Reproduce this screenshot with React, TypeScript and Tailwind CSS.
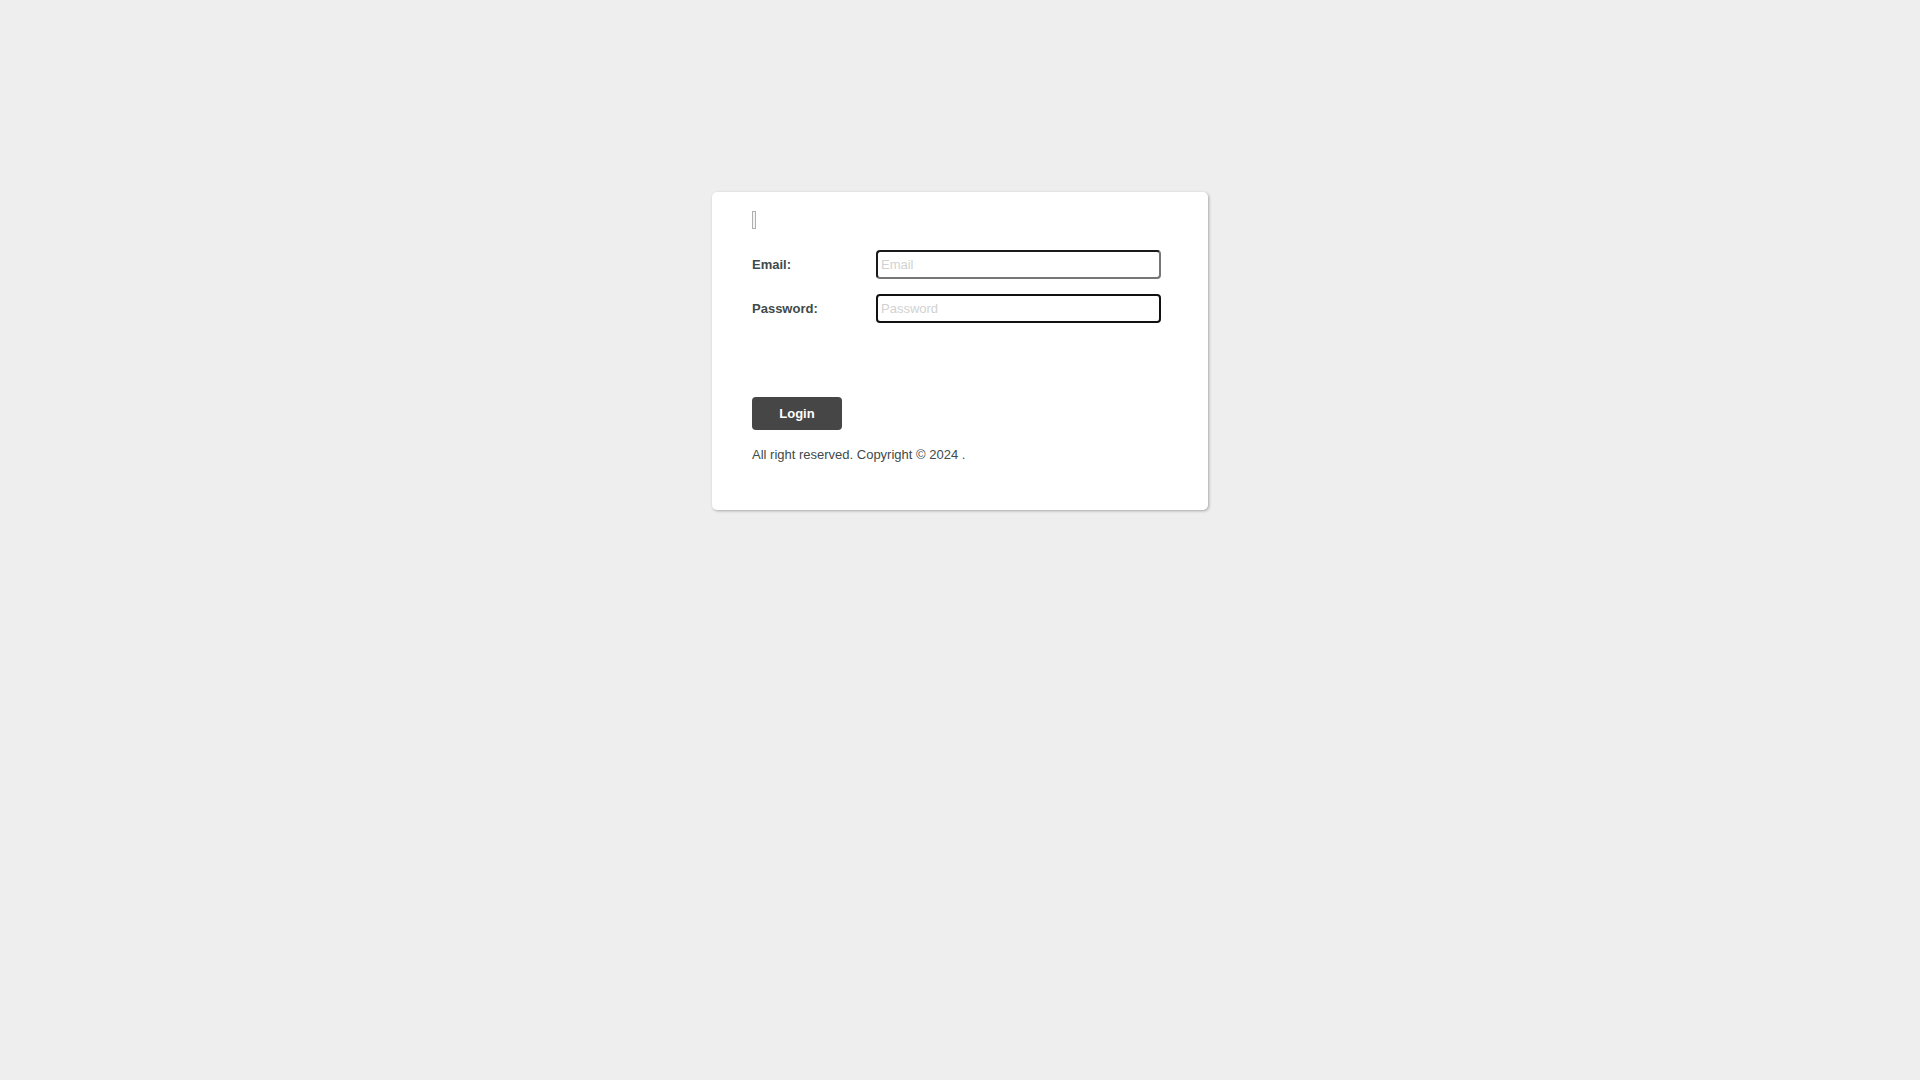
export default function App() {
  return (
    <div className="min-h-screen bg-[#eeeeee] flex justify-center pt-[192px] font-['Liberation_Sans',Arial,sans-serif]">
      <div className="w-[496px] h-[318px] bg-white rounded-[5px] shadow-[1px_1px_3px_rgba(0,0,0,0.3)] pl-[40px] pr-[47px] pt-[19px]">
        {/* broken logo image */}
        <div className="w-[4px] h-[18px] border border-[#b0b0b0] bg-[#f4f4f4]" />

        <form className="mt-[21px] flex flex-col gap-[15px]">
          <div className="flex items-center">
            <label className="w-[124px] text-[13px] font-bold text-[#404a4a]">Email:</label>
            <input
              type="text"
              placeholder="Email"
              className="w-[285px] h-[29px] px-[3px] text-[13px] rounded-[4px] border-2 border-t-[#1a1a1a] border-l-[#1a1a1a] border-r-[#767676] border-b-[#767676] placeholder:text-[#d2d2d2] outline-none"
            />
          </div>
          <div className="flex items-center">
            <label className="w-[124px] text-[13px] font-bold text-[#404a4a]">Password:</label>
            <input
              type="password"
              placeholder="Password"
              className="w-[285px] h-[29px] px-[3px] text-[13px] rounded-[4px] border-2 border-[#111111] placeholder:text-[#d2d2d2] outline-none"
            />
          </div>
        </form>

        <button
          type="button"
          className="mt-[74px] w-[90px] h-[33px] rounded-[4px] bg-[#464646] text-white text-[13px] font-bold"
        >
          Login
        </button>

        <p className="mt-[17px] text-[13px] leading-[15px] text-[#404a4a]">
          All right reserved. Copyright © 2024 .
        </p>
      </div>
    </div>
  )
}
